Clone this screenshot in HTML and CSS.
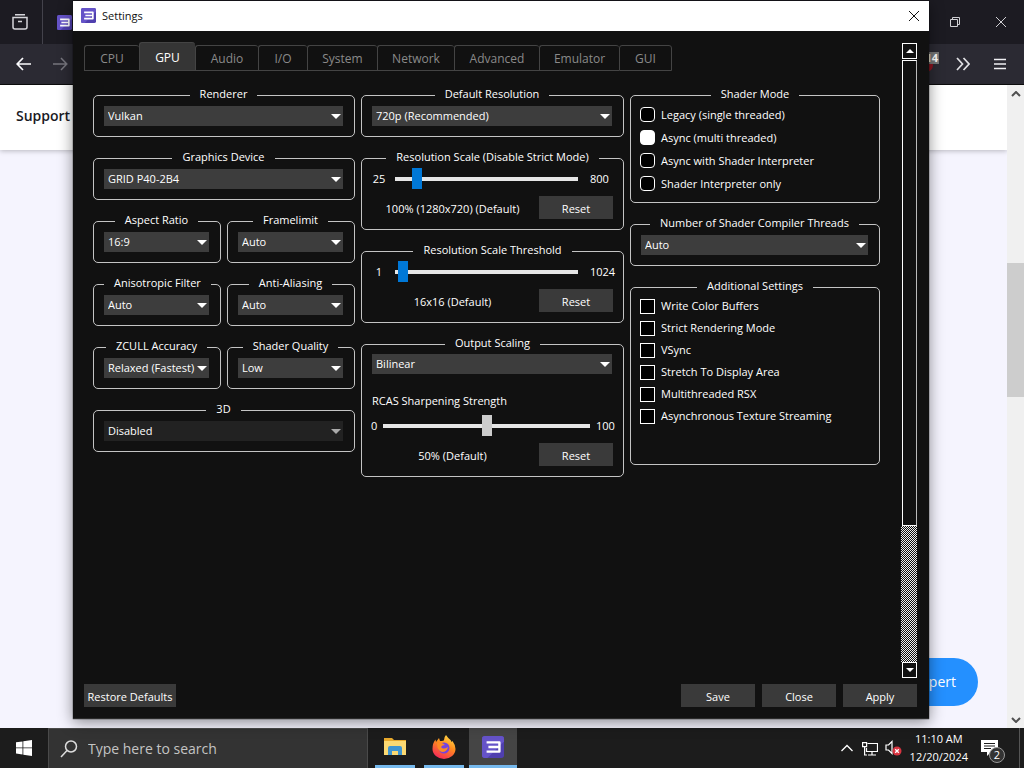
FILE: index.html
```html
<!DOCTYPE html>
<html lang="en">
<head>
<meta charset="utf-8">
<title>Settings</title>
<link rel="stylesheet" href="styles.css">
</head>
<body>
<svg class="defs" aria-hidden="true">
  <symbol id="logo" viewBox="0 0 24 24">
    <rect width="24" height="24" rx="3" fill="#4f3fae"/>
    <path d="M3 0h18a3 3 0 0 1 3 3v3L6 24H3a3 3 0 0 1-3-3V3a3 3 0 0 1 3-3z" fill="#6553c8"/>
    <path d="M5 7h14v10H5M7 12h12" fill="none" stroke="#fff" stroke-width="2.600" stroke-linejoin="round"/>
  </symbol>
</svg>
<div class="desktop">
  <main class="browser">
    <header class="tabstrip">
      <button class="icon-btn view" aria-label="Firefox View"><svg width="18" height="18" viewBox="0 0 18 18" fill="none" stroke="#d5d5da" stroke-width="1.500"><path d="M4 1.700h10M2 4.500h14v9.500a2 2 0 0 1-2 2H4a2 2 0 0 1-2-2zM7 8.500h4"/></svg></button>
      <span class="page-tab"><svg width="15" height="15"><use href="#logo"/></svg></span>
      <span class="spring"></span>
      <button class="icon-btn" aria-label="Restore"><svg width="12" height="12" viewBox="0 0 12 12" fill="none" stroke="#d0d0d4"><path d="M1.500 3.500h7v7h-7zM3.500 3.500v-2h7v7h-2"/></svg></button>
      <button class="icon-btn" aria-label="Close browser"><svg width="12" height="12" viewBox="0 0 12 12" stroke="#d0d0d4"><path d="M1 1l10 10M11 1L1 11"/></svg></button>
    </header>
    <nav class="toolbar">
      <button class="icon-btn back" aria-label="Back"><svg width="16" height="14" viewBox="0 0 16 14" fill="none" stroke="#fbfbfe" stroke-width="1.700"><path d="M15 7H1.500M7 1L1.200 7 7 13"/></svg></button>
      <button class="icon-btn fwd" aria-label="Forward"><svg width="16" height="14" viewBox="0 0 16 14" fill="none" stroke="#77767e" stroke-width="1.500"><path d="M1 7h13.500M9 1l5.800 6L9 13"/></svg></button>
      <span class="spring"></span>
      <span class="addon"><i></i><b>14</b></span>
      <button class="icon-btn" aria-label="More tools"><svg width="14" height="14" viewBox="0 0 14 14" fill="none" stroke="#e0e0e4" stroke-width="1.700"><path d="M1 1l5.500 6L1 13M7.500 1L13 7l-5.500 6"/></svg></button>
      <button class="icon-btn" aria-label="Menu"><svg width="12" height="12" viewBox="0 0 12 12" stroke="#f0f0f4" stroke-width="1.600"><path d="M0 1.500h12M0 6h12M0 10.500h12"/></svg></button>
    </nav>
    <div class="viewport">
      <div class="page">
        <div class="site-head"><a href="#support">Support</a></div>
        <button class="cta">Expert</button>
      </div>
      <div class="page-scroll">
        <svg width="10" height="6" viewBox="0 0 10 6" fill="none" stroke="#505050" stroke-width="2"><path d="M1 5l4-4 4 4"/></svg>
        <span class="page-thumb"></span>
        <svg width="10" height="6" viewBox="0 0 10 6" fill="none" stroke="#505050" stroke-width="2"><path d="M1 1l4 4 4-4"/></svg>
      </div>
    </div>
  </main>

  <section class="dialog" role="dialog" aria-labelledby="dlg-title">
    <header class="titlebar">
      <svg width="15" height="15"><use href="#logo"/></svg>
      <h1 id="dlg-title">Settings</h1>
      <button aria-label="Close dialog"><svg width="12" height="12" viewBox="0 0 12 12" stroke="#111"><path d="M1 1l10 10M11 1L1 11"/></svg></button>
    </header>
    <div class="dialog-body">
      <div class="scroller">
        <div class="content">
          <div class="tabs" role="tablist">
            <button role="tab">CPU</button>
            <button role="tab" aria-selected="true">GPU</button>
            <button role="tab">Audio</button>
            <button role="tab">I/O</button>
            <button role="tab">System</button>
            <button role="tab">Network</button>
            <button role="tab">Advanced</button>
            <button role="tab">Emulator</button>
            <button role="tab">GUI</button>
          </div>
          <div class="columns">
            <div class="column">
              <fieldset><legend>Renderer</legend><div class="combo"><select aria-label="Renderer"><option>Vulkan</option></select></div></fieldset>
              <fieldset><legend>Graphics Device</legend><div class="combo"><select aria-label="Graphics Device"><option>GRID P40-2B4</option></select></div></fieldset>
              <div class="pair">
                <fieldset><legend>Aspect Ratio</legend><div class="combo"><select aria-label="Aspect Ratio"><option>16:9</option></select></div></fieldset>
                <fieldset><legend>Framelimit</legend><div class="combo"><select aria-label="Framelimit"><option>Auto</option></select></div></fieldset>
              </div>
              <div class="pair">
                <fieldset><legend>Anisotropic Filter</legend><div class="combo"><select aria-label="Anisotropic Filter"><option>Auto</option></select></div></fieldset>
                <fieldset><legend>Anti-Aliasing</legend><div class="combo"><select aria-label="Anti-Aliasing"><option>Auto</option></select></div></fieldset>
              </div>
              <div class="pair">
                <fieldset><legend>ZCULL Accuracy</legend><div class="combo"><select aria-label="ZCULL Accuracy"><option>Relaxed (Fastest)</option></select></div></fieldset>
                <fieldset><legend>Shader Quality</legend><div class="combo"><select aria-label="Shader Quality"><option>Low</option></select></div></fieldset>
              </div>
              <fieldset><legend>3D</legend><div class="combo off"><select aria-label="3D" disabled><option>Disabled</option></select></div></fieldset>
            </div>

            <div class="column">
              <fieldset><legend>Default Resolution</legend><div class="combo"><select aria-label="Default Resolution"><option>720p (Recommended)</option></select></div></fieldset>
              <fieldset class="scale">
                <legend>Resolution Scale (Disable Strict Mode)</legend>
                <div class="slider"><span>25</span><input type="range" aria-label="Resolution Scale" min="25" max="800" value="100"><span>800</span></div>
                <div class="result"><output>100% (1280x720) (Default)</output><button class="btn">Reset</button></div>
              </fieldset>
              <fieldset class="scale">
                <legend>Resolution Scale Threshold</legend>
                <div class="slider"><span>1</span><input type="range" aria-label="Resolution Scale Threshold" min="1" max="1024" value="16"><span>1024</span></div>
                <div class="result"><output>16x16 (Default)</output><button class="btn">Reset</button></div>
              </fieldset>
              <fieldset class="scale">
                <legend>Output Scaling</legend>
                <div class="combo"><select aria-label="Output Scaling"><option>Bilinear</option></select></div>
                <label class="rcas" for="rcas">RCAS Sharpening Strength</label>
                <div class="slider wide"><span>0</span><input id="rcas" type="range" min="0" max="100" value="50" disabled><span>100</span></div>
                <div class="result"><output>50% (Default)</output><button class="btn">Reset</button></div>
              </fieldset>
            </div>

            <div class="column">
              <fieldset class="options radios">
                <legend>Shader Mode</legend>
                <label><input type="radio" name="mode">Legacy (single threaded)</label>
                <label><input type="radio" name="mode" checked>Async (multi threaded)</label>
                <label><input type="radio" name="mode">Async with Shader Interpreter</label>
                <label><input type="radio" name="mode">Shader Interpreter only</label>
              </fieldset>
              <fieldset><legend>Number of Shader Compiler Threads</legend><div class="combo"><select aria-label="Number of Shader Compiler Threads"><option>Auto</option></select></div></fieldset>
              <fieldset class="options checks">
                <legend>Additional Settings</legend>
                <label><input type="checkbox">Write Color Buffers</label>
                <label><input type="checkbox">Strict Rendering Mode</label>
                <label><input type="checkbox">VSync</label>
                <label><input type="checkbox">Stretch To Display Area</label>
                <label><input type="checkbox">Multithreaded RSX</label>
                <label><input type="checkbox">Asynchronous Texture Streaming</label>
              </fieldset>
            </div>
          </div>
        </div>
        <div class="scrollbar">
          <button aria-label="Scroll up"><svg width="8" height="4"><path d="M0 4l4-4 4 4z" fill="#fff"/></svg></button>
          <span class="thumb"></span>
          <span class="groove"></span>
          <button aria-label="Scroll down"><svg width="8" height="4"><path d="M0 0l4 4 4-4z" fill="#fff"/></svg></button>
        </div>
      </div>
      <footer class="actions">
        <button class="btn restore">Restore Defaults</button>
        <span class="spring"></span>
        <button class="btn">Save</button>
        <button class="btn">Close</button>
        <button class="btn">Apply</button>
      </footer>
    </div>
  </section>

  <footer class="taskbar">
    <button class="start" aria-label="Start"><svg width="16" height="16" viewBox="0 0 16 16" fill="#fff"><path d="M0 2.300l6.500-.9v6.100H0zM7.300 1.300L16 0v7.500H7.300zM0 8.300h6.500v6.200L0 13.600zM7.300 8.300H16V16l-8.700-1.300z"/></svg></button>
    <label class="search"><svg width="18" height="18" viewBox="0 0 18 18" fill="none" stroke="#ddd" stroke-width="1.500"><circle cx="11" cy="6.500" r="5.500"/><path d="M7 10.500L1 17"/></svg><input type="text" placeholder="Type here to search" aria-label="Search"></label>
    <div class="apps">
      <button class="app" aria-label="File Explorer"><svg width="22" height="20" viewBox="0 0 22 20"><path d="M0 1h8l2 2h12v15H0z" fill="#e8a92c"/><path d="M0 4h22v14H0z" fill="#fbd972"/><path d="M4 18v-7q0-2 2-2h10q2 0 2 2v7h-4v-4H8v4z" fill="#3f95d0"/></svg></button>
      <button class="app" aria-label="Firefox"><svg width="24" height="24" viewBox="0 0 24 24"><defs><linearGradient id="fox" x1="0.800" y1="0" x2="0.300" y2="1"><stop offset="0" stop-color="#ffe14a"/><stop offset=".45" stop-color="#ff8a1e"/><stop offset="1" stop-color="#f5275a"/></linearGradient></defs><path d="M14 0q2 3 4 4.500 1 .8 1.500 2.500l1-1q3 4 3 8a11.500 10 0 0 1-23 0q0-6 3-9.500l.5 2.500L7 3l1 3q4 0 4-1 0-3 2-5z" fill="url(#fox)"/><circle cx="12" cy="13" r="5.500" fill="#7543e0"/><path d="M5 8q5-1 8 2-3 0-4 2 2 3 7 0-1 5-6 5-5-1-5-9z" fill="#ff8a25"/></svg></button>
      <button class="app active" aria-label="RPCS3"><svg width="22" height="22"><use href="#logo"/></svg></button>
    </div>
    <span class="spring"></span>
    <div class="tray">
      <svg class="more" width="12" height="8" viewBox="0 0 12 8" fill="none" stroke="#fff" stroke-width="1.300"><path d="M.5 7L6 1.500 11.500 7"/></svg>
      <svg width="16" height="15" viewBox="0 0 16 15" fill="none" stroke="#fff" stroke-width="1.200"><path d="M5.500 2.500h10v8H4.500V7M10 10.500V14M6 14h8M.6 1.600h4v4h-4zM2.600 5.600V14H5"/></svg>
      <svg width="18" height="16" viewBox="0 0 18 16"><path d="M1 5h2.500L7 1.500v12L3.500 10H1z" fill="none" stroke="#fff" stroke-width="1.200"/><circle cx="12" cy="11" r="4.500" fill="#d83440"/><path d="M10.200 9.200l3.600 3.600M13.800 9.200l-3.600 3.600" stroke="#fff" stroke-width="1.300"/></svg>
      <time class="clock"><span>11:10 AM</span><span>12/20/2024</span></time>
      <button class="notes" aria-label="2 notifications"><svg width="17" height="16" viewBox="0 0 17 16"><path d="M0 0h17v12H10l-4 4v-4H0z" fill="#fff"/><path d="M3 3.500h11M3 6h11M3 8.500h7" stroke="#1c1c1c"/></svg><b>2</b></button>
    </div>
  </footer>
</div>
</body>
</html>
```
FILE: styles.css
```css
* { box-sizing: border-box; }
html, body { height: 100%; }
body {
  margin: 0;
  font: 11px/16px "Open Sans", "Noto Sans", sans-serif;
  color: #fff;
}
button, select, input { font: inherit; color: inherit; }
button { background: none; border: 0; padding: 0; }
svg { display: block; flex: none; }
.defs { position: absolute; width: 0; height: 0; }
.spring { flex: 1; }

.desktop { position: relative; min-height: 100vh; display: flex; flex-direction: column; }

/* browser behind the dialog */
.browser { flex: 1; display: flex; flex-direction: column; }
.tabstrip, .toolbar { display: flex; align-items: center; }
.tabstrip { height: 44px; background: #1c1b22; }
.toolbar { height: 41px; background: #2b2a33; border-bottom: 1px solid #0c0c0d; }
.icon-btn { width: 46px; height: 40px; display: grid; place-items: center; }
.view { width: 43px; height: 44px; padding-right: 3px; border-right: 1px solid #43424b; }
.page-tab { padding-left: 14px; }
.back { width: 48px; }
.fwd { width: 24px; }
.toolbar .icon-btn:nth-last-child(-n+2) { width: 37px; }
.toolbar .icon-btn:last-child { margin-right: 6px; }
.addon { position: relative; width: 36px; height: 20px; }
.addon i { position: absolute; right: 12px; top: 4px; width: 16px; height: 14px; border-radius: 7px; background: #8c1420; }
.addon b { position: absolute; right: 6px; top: -2px; padding: 0 1px; background: #777; font-size: 11px; line-height: 12px; }
.toolbar .addon { margin-right: -1px; }
.viewport { flex: 1; display: flex; }
.page { flex: 1; display: flex; flex-direction: column; justify-content: space-between; background: #f5f4fe; }
.site-head { height: 65px; padding: 21px 16px; background: #fff; box-shadow: 0 1px 5px rgba(0, 0, 0, .25); }
.site-head a { color: #1a1a1f; text-decoration: none; font: 600 14px/20px "Open Sans", sans-serif; }
.cta { align-self: flex-end; width: 152px; height: 48px; margin: 0 29px 22px; padding-right: 22px; border-radius: 24px; background: #2490ff; text-align: right; font: 14px/20px "Open Sans", sans-serif; }
.page-scroll { width: 17px; padding: 6px 0 5px; display: flex; flex-direction: column; align-items: center; background: #f0f0f0; }
.page-thumb { width: 17px; flex: 134; max-height: 134px; margin-top: 166px; background: #cdcdcd; }
.page-thumb + svg { margin-top: auto; }

/* dialog window */
.dialog {
  position: absolute; inset: 1px 95px 49px 73px;
  display: flex; flex-direction: column;
  background: #111; border-bottom: 1px solid #2a2a2a;
  box-shadow: 0 3px 14px rgba(0, 0, 0, .45), 0 0 1px #000;
}
.titlebar { height: 30px; padding: 0 9px 1px 8px; display: flex; align-items: center; background: #fff; color: #111; }
.titlebar h1 { flex: 1; margin: 0 0 0 6px; font: inherit; }
.dialog-body { flex: 1; display: flex; flex-direction: column; padding: 11px 12px; }
.scroller { flex: 1; display: flex; }
.content { flex: 1; }
.tabs {
  display: grid; align-items: end; justify-content: start;
  grid-template-columns: 55px 56px 63px 49px 70px 77px 85px 80px 53px;
  height: 29px; margin-left: -1px;
}
.tabs button { height: 26px; padding-top: 2px; border: 1px solid #444; border-right-width: 0; border-radius: 3px 3px 0 0; color: #8a8a8a; font-size: 12px; }
.tabs button:last-child { border-right-width: 1px; }
.tabs [aria-selected] { height: 29px; background: #353535; color: #fff; }
.columns { display: grid; grid-template-columns: 262fr 263fr 250fr; gap: 6px; padding: 14px 21px 0 8px; align-items: start; }
.column { display: grid; gap: 11px; }
.pair { display: grid; grid-template-columns: 1fr 1fr; gap: 6px; }

fieldset { min-width: 0; margin: 0; padding: 1px 11px 10px 10px; border: 1px solid #c4c4c4; border-radius: 5px; }
legend { margin: 0 auto; padding: 1px 10px 3px; white-space: nowrap; }
.combo { position: relative; height: 20px; display: flex; background: #3d3d3d; }
.combo select { flex: 1; min-width: 0; padding: 0 13px 0 4px; appearance: none; border: 0; border-radius: 0; background: transparent; opacity: 1; }
.combo::after { content: ""; position: absolute; right: 2px; top: 8px; width: 10px; height: 5px; background: #fff; clip-path: polygon(0 0, 100% 0, 50% 100%); pointer-events: none; }
.off { background: #222; }
.off::after { background: #aaa; }

.scale { padding: 0 10px 10px; }
.scale .combo { margin-right: 1px; }
.slider { height: 21px; display: flex; align-items: center; }
.slider span { width: 16px; padding-top: 1px; text-align: center; white-space: nowrap; }
.slider span:first-child { margin-right: 8px; margin-left: -1px; }
.slider span:last-child { width: 35px; text-align: left; padding-left: 12px; }
.slider.wide span:first-child { width: 6px; margin-right: 6px; }
.slider.wide span:last-child { width: 23px; padding-left: 6px; }
.slider input { flex: 1; min-width: 0; height: 21px; margin: 0; appearance: none; background: linear-gradient(#e6e6e6, #e6e6e6) center / 100% 4px no-repeat; }
.slider input::-webkit-slider-thumb { appearance: none; width: 10px; height: 21px; background: #0078d7; }
.slider input:disabled::-webkit-slider-thumb { background: #ccc; }
.result { display: flex; align-items: center; justify-content: space-between; margin-top: 7px; }
.result output { flex: 1; padding: 2px 6px 0 0; text-align: center; }
.rcas { display: block; margin: 19px 0 6px; }
.btn { min-width: 74px; height: 23px; padding-top: 2px; background: #3a3a3a; }

.options { padding: 0 9px; }
.options legend { margin-bottom: -2px; }
.options label { display: flex; align-items: center; gap: 6px; height: 22px; white-space: nowrap; }
.options input { appearance: none; width: 15px; height: 15px; margin: 0; border: 1px solid #fff; background: #000; }
.radios { padding-bottom: 7px; }
.radios label { height: 23px; }
.radios input { border-radius: 4px; }
.radios input:checked { background: #fff; }
.checks { padding-bottom: 37px; }

.scrollbar { width: 16px; padding-top: 1px; display: flex; flex-direction: column; }
.scrollbar button { height: 16px; margin-left: 1px; display: grid; place-items: center; border: 1px solid #fff; }
.thumb { flex: 466; margin: 1px 0 0 1px; border: 1px solid #fff; border-right-color: #bbb; }
.groove { flex: 136; background: repeating-conic-gradient(#eee 0 25%, #111 0 50%) 0 0 / 2px 2px; }
.actions { display: flex; gap: 7px; padding-top: 6px; margin-left: -1px; }
.actions .restore { min-width: 92px; }

/* taskbar */
.taskbar { height: 40px; display: flex; background: #1c1c1c; }
.start { width: 48px; display: grid; place-items: center; }
.search { width: 320px; display: flex; align-items: center; gap: 10px; padding: 0 11px; background: #333; border: 1px solid #4a4a4a; border-bottom-width: 0; }
.search input { flex: 1; min-width: 0; border: 0; padding: 0; background: none; font-size: 14px; }
.search input::placeholder { color: #c4c4c4; opacity: 1; }
.apps { display: flex; gap: 9px; padding-left: 7px; }
.app { width: 40px; display: grid; place-items: center; border-bottom: 3px solid #76b9ed; }
.app.active { width: 48px; margin-left: -4px; background: #454545; }
.tray { display: flex; align-items: center; gap: 7px; padding-right: 4px; }
.more { margin-right: 2px; }
.clock { display: grid; line-height: 18px; text-align: center; }
.notes { position: relative; display: grid; place-items: center; width: 45px; height: 40px; padding-right: 16px; border-right: 1px solid #555; }
.notes b { position: absolute; left: 14px; top: 19px; width: 16px; height: 16px; border: 1px solid #999; border-radius: 8px; background: #333; font-weight: 400; font-size: 11px; line-height: 14px; }
```
